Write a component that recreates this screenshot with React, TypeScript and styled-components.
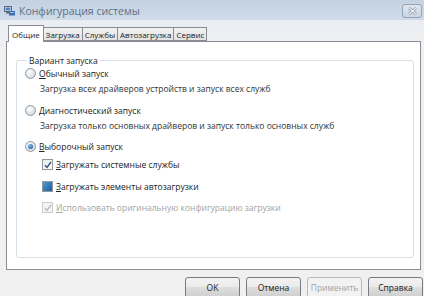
import React from 'react';
import styled, { createGlobalStyle } from 'styled-components';

const GlobalStyle = createGlobalStyle`
	html, body {
		margin: 0;
		padding: 0;
		background: #f0f0f0;
	}
	body {
		font-family: "Open Sans", "Noto Sans", sans-serif;
		font-size: 8.5px;
		color: #1f1f1f;
	}
`;

const Window = styled.div`
	width: 424px;
	height: 296px;
	overflow: hidden;
	display: flex;
	flex-direction: column;
	background: #f0f0f0;
`;

const TitleBar = styled.div`
	height: 20px;
	flex: none;
	display: flex;
	align-items: center;
	padding: 2px 2px 0 4px;
	box-sizing: border-box;
	background: linear-gradient(#c3d1e1, #cfdbe8);
`;

const TitleText = styled.span`
	margin-left: 4px;
	font-size: 10.5px;
	color: #5d7089;
	flex: 1;
`;

const CloseButton = styled.div`
	width: 20px;
	height: 14px;
	box-sizing: border-box;
	border: 1px solid #95a3b4;
	border-radius: 3px;
	background: linear-gradient(#dfe6ee, #cbd5e1);
	display: flex;
	align-items: center;
	justify-content: center;
`;

const Body = styled.div`
	flex: 1;
	display: flex;
	flex-direction: column;
	padding: 0 3px 0 6px;
	background: linear-gradient(#e9edf2, #f0f0f0 30px);
`;

const TabStrip = styled.div`
	height: 21px;
	display: flex;
	align-items: flex-end;
	padding-left: 2px;
	position: relative;
	z-index: 1;
`;

const Tab = styled.div<{ $active?: boolean }>`
	height: ${p => (p.$active ? 17 : 14)}px;
	margin-bottom: ${p => (p.$active ? -1 : 0)}px;
	box-sizing: border-box;
	padding: 0 ${p => (p.$active ? 3 : 2)}px;
	border: 1px solid #898c95;
	border-bottom: ${p => (p.$active ? 'none' : '1px solid #898c95')};
	margin-left: -1px;
	background: ${p => (p.$active ? '#ffffff' : 'linear-gradient(#f2f2f2, #e3e3e3)')};
	display: flex;
	align-items: center;
	font-size: 8px;
	color: #222;
	position: relative;
	z-index: ${p => (p.$active ? 2 : 1)};
	&:first-child {
		margin-left: 0;
	}
`;

const Panel = styled.div`
	height: 229px;
	box-sizing: border-box;
	border: 1px solid #898c95;
	background: #ffffff;
	padding: 13px 6px 0 9px;
`;

const Group = styled.fieldset`
	margin: 0;
	height: 203px;
	box-sizing: border-box;
	border: 1px solid #d5dfe5;
	border-radius: 3px;
	padding: 0 0 0 8px;
`;

const Legend = styled.legend`
	padding: 0 2px;
	margin-left: 2px;
	color: #222;
`;

const Options = styled.div`
	display: flex;
	flex-direction: column;
`;

const Row = styled.label<{ $indent?: number; $gap?: number; $disabled?: boolean }>`
	height: 15px;
	display: flex;
	align-items: center;
	gap: 3px;
	padding-left: ${p => p.$indent ?? 0}px;
	margin-top: ${p => p.$gap ?? 0}px;
	color: ${p => (p.$disabled ? '#a3a3a3' : '#222')};
`;

const Description = styled.div`
	height: 15px;
	display: flex;
	align-items: center;
	padding-left: 15px;
	color: #333;
`;

const RadioMark = styled.span<{ $checked?: boolean }>`
	width: 11px;
	height: 11px;
	box-sizing: border-box;
	border-radius: 50%;
	border: 1px solid #8f9aa3;
	background: radial-gradient(circle at 40% 35%, #ffffff, #d3d7db 80%);
	display: flex;
	align-items: center;
	justify-content: center;
	&::after {
		content: '';
		display: ${p => (p.$checked ? 'block' : 'none')};
		width: 5px;
		height: 5px;
		border-radius: 50%;
		background: radial-gradient(circle at 40% 35%, #7fc0f0, #1d5c9a 80%);
	}
`;

const CheckMark = styled.span<{ $disabled?: boolean; $filled?: boolean }>`
	width: 11px;
	height: 11px;
	box-sizing: border-box;
	border: 1px solid ${p => (p.$disabled ? '#c9cccf' : '#8f9aa3')};
	background: ${p =>
		p.$filled
			? 'linear-gradient(135deg, #4a9ad0, #1f5f9c)'
			: p.$disabled
			? '#f4f4f4'
			: 'linear-gradient(135deg, #e8eaec, #ffffff)'};
	display: flex;
	align-items: center;
	justify-content: center;
`;

const ButtonRow = styled.div`
	display: flex;
	justify-content: flex-end;
	gap: 6px;
	margin-top: 7px;
	margin-right: -2px;
`;

const Button = styled.div<{ $disabled?: boolean }>`
	width: 55px;
	height: 21px;
	box-sizing: border-box;
	border: 1px solid ${p => (p.$disabled ? '#b7bbbf' : '#777c82')};
	border-radius: 3px;
	background: ${p =>
		p.$disabled ? '#f2f2f2' : 'linear-gradient(#f3f3f3 0%, #ebebeb 45%, #dddddd 50%, #cfcfcf 100%)'};
	display: flex;
	align-items: center;
	justify-content: center;
	color: ${p => (p.$disabled ? '#a3a3a3' : '#222')};
`;

function AppIcon() {
	return (
		<svg width="11" height="10" viewBox="0 0 11 10">
			<rect x="0.5" y="0.5" width="7" height="5" fill="#dfe6ee" stroke="#5a6a80" />
			<rect x="1.5" y="1.5" width="5" height="3" fill="#4f86c6" />
			<rect x="2" y="6" width="4" height="1.5" fill="#5a6a80" />
			<rect x="5" y="5" width="6" height="4.5" fill="#3c6fb0" />
			<rect x="6" y="6" width="4" height="1" fill="#9cc4ea" />
		</svg>
	);
}

function CloseIcon() {
	return (
		<svg width="9" height="8" viewBox="0 0 9 8">
			<path d="M1 1 L8 7 M8 1 L1 7" stroke="#7e8c9c" strokeWidth="2.4" />
			<path d="M1 1 L8 7 M8 1 L1 7" stroke="#f4f6f9" strokeWidth="1.1" />
		</svg>
	);
}

function Tick({ color }: { color: string }) {
	return (
		<svg width="8" height="8" viewBox="0 0 8 8">
			<path d="M1 4.2 L3 6.4 L7 1" fill="none" stroke={color} strokeWidth="1.4" />
		</svg>
	);
}

export default function App() {
	return (
		<>
			<GlobalStyle />
			<Window>
				<TitleBar>
					<AppIcon />
					<TitleText>Конфигурация системы</TitleText>
					<CloseButton>
						<CloseIcon />
					</CloseButton>
				</TitleBar>
				<Body>
					<TabStrip>
						<Tab $active>Общие</Tab>
						<Tab>Загрузка</Tab>
						<Tab>Службы</Tab>
						<Tab>Автозагрузка</Tab>
						<Tab>Сервис</Tab>
					</TabStrip>
					<Panel>
						<Group>
							<Legend>Вариант запуска</Legend>
							<Options>
								<Row>
									<RadioMark />
									<span><u>О</u>бычный запуск</span>
								</Row>
								<Description>Загрузка всех драйверов устройств и запуск всех служб</Description>
								<Row $gap={7}>
									<RadioMark />
									<span><u>Д</u>иагностический запуск</span>
								</Row>
								<Description>Загрузка только основных драйверов и запуск только основных служб</Description>
								<Row $gap={6}>
									<RadioMark $checked />
									<span><u>В</u>ыборочный запуск</span>
								</Row>
								<Row $indent={17} $gap={3}>
									<CheckMark>
										<Tick color="#3b4f7a" />
									</CheckMark>
									<span><u>З</u>агружать системные службы</span>
								</Row>
								<Row $indent={17} $gap={7}>
									<CheckMark $filled />
									<span><u>З</u>агружать элементы автозагрузки</span>
								</Row>
								<Row $indent={17} $gap={6} $disabled>
									<CheckMark $disabled>
										<Tick color="#b5b9bd" />
									</CheckMark>
									<span><u>И</u>спользовать оригинальную конфигурацию загрузки</span>
								</Row>
							</Options>
						</Group>
					</Panel>
					<ButtonRow>
						<Button>OK</Button>
						<Button>Отмена</Button>
						<Button $disabled>Применить</Button>
						<Button>Справка</Button>
					</ButtonRow>
				</Body>
			</Window>
		</>
	);
}
